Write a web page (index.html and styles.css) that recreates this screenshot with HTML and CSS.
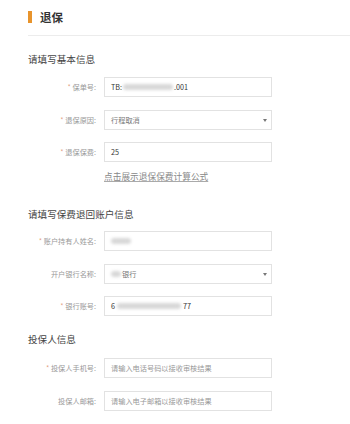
FILE: index.html
```html
<!DOCTYPE html>
<html lang="zh-CN">

<head>
    <meta charset="UTF-8">
    <meta name="viewport" content="width=device-width, initial-scale=1.0">
    <title>退保</title>
    <link rel="stylesheet" href="styles.css">
</head>

<body>
    <div class="page">
        <div class="header">
            <div class="bar"></div>
            <h1 class="title">退保</h1>
        </div>

        <div class="section first">
            <h2 class="section-title">请填写基本信息</h2>
            <div class="rows">
                <div class="row">
                    <label class="label"><span class="star">*</span> 保单号:</label>
                    <div class="field dark">TB:<span class="blur w50"></span>.001</div>
                </div>
                <div class="row">
                    <label class="label"><span class="star">*</span> 退保原因:</label>
                    <div class="field select">行程取消<span class="arrow"></span></div>
                </div>
                <div class="row">
                    <label class="label"><span class="star">*</span> 退保保费:</label>
                    <div class="field dark">25</div>
                </div>
            </div>
            <a class="formula" href="#">点击展示退保保费计算公式</a>
        </div>

        <div class="section second">
            <h2 class="section-title">请填写保费退回账户信息</h2>
            <div class="rows">
                <div class="row">
                    <label class="label"><span class="star">*</span> 账户持有人姓名:</label>
                    <div class="field"><span class="blur w20"></span></div>
                </div>
                <div class="row">
                    <label class="label">开户银行名称:</label>
                    <div class="field select"><span class="blur w10"></span>银行<span class="arrow"></span></div>
                </div>
                <div class="row">
                    <label class="label"><span class="star">*</span> 银行账号:</label>
                    <div class="field dark">6<span class="blur w64"></span>77</div>
                </div>
            </div>
        </div>

        <div class="section third">
            <h2 class="section-title">投保人信息</h2>
            <div class="rows">
                <div class="row">
                    <label class="label"><span class="star">*</span> 投保人手机号:</label>
                    <div class="field hint">请输入电话号码以接收审核结果</div>
                </div>
                <div class="row">
                    <label class="label">投保人邮箱:</label>
                    <div class="field hint">请输入电子邮箱以接收审核结果</div>
                </div>
            </div>
        </div>
    </div>
</body>

</html>
```

FILE: styles.css
```css
* {
    margin: 0;
    padding: 0;
    box-sizing: border-box;
}

body {
    width: 350px;
    height: 424px;
    background: #fff;
    font-family: "Noto Sans CJK SC", "Noto Sans", sans-serif;
    color: #333;
    overflow: hidden;
}

.page {
    padding-left: 28px;
}

.header {
    height: 36px;
    display: flex;
    align-items: center;
    gap: 8px;
    padding-bottom: 1px;
    border-bottom: 1px solid #ececec;
}

.bar {
    width: 4px;
    height: 12px;
    background: #e8942c;
}

.title {
    font-size: 11.5px;
    font-weight: bold;
    line-height: 14px;
    color: #333;
}

.section-title {
    font-size: 9.6px;
    font-weight: normal;
    line-height: 14px;
    color: #444;
}

.first {
    padding-top: 16px;
}

.second {
    padding-top: 24px;
}

.third {
    padding-top: 16px;
}

.rows {
    display: flex;
    flex-direction: column;
    gap: 12.5px;
    margin-top: 11px;
}

.second .rows {
    margin-top: 10px;
}

.third .rows {
    margin-top: 12px;
}

.row {
    display: grid;
    grid-template-columns: 76px 168px;
    align-items: center;
}

.label {
    font-size: 7.2px;
    color: #999;
    text-align: right;
    padding-right: 8px;
}

.star {
    color: #e2a080;
}

.field {
    position: relative;
    height: 20px;
    border: 1px solid #e2e2e2;
    display: flex;
    align-items: center;
    padding-left: 6px;
    font-size: 7.2px;
    color: #777;
}

.field.dark {
    color: #333;
}

.field.hint {
    color: #999;
}

.arrow {
    position: absolute;
    right: 4px;
    top: 8px;
    border-left: 2px solid transparent;
    border-right: 2px solid transparent;
    border-top: 3px solid #777;
}

.blur {
    display: inline-block;
    height: 6px;
    background: #d8d8d8;
    border-radius: 3px;
    filter: blur(1.5px);
}

.w10 {
    width: 10px;
    margin-right: 1px;
}

.w20 {
    width: 20px;
}

.w50 {
    width: 50px;
    margin: 0 1px;
}

.w64 {
    width: 64px;
    margin: 0 2px;
}

.formula {
    display: block;
    margin: 9px 0 0 76px;
    font-size: 8.7px;
    line-height: 12px;
    color: #888;
    text-decoration: underline;
    text-decoration-color: #aaa;
}
```
